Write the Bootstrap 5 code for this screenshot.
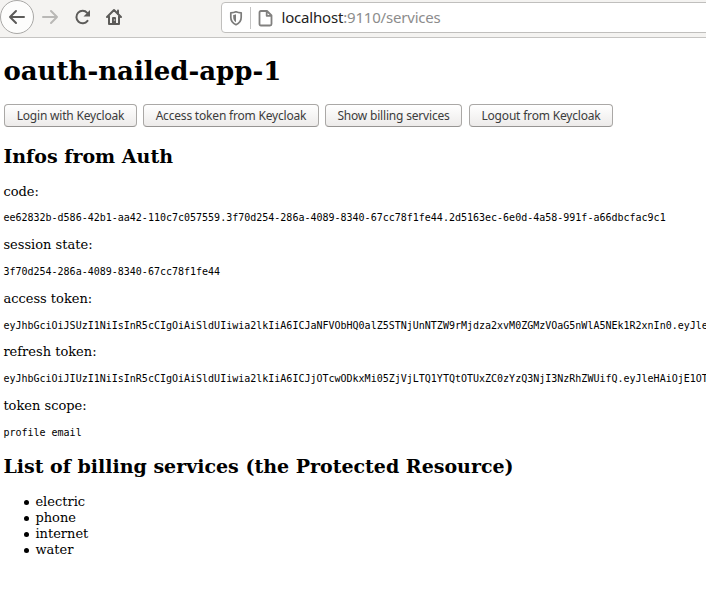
<!DOCTYPE html>
<html lang="en">
<head>
<meta charset="utf-8">
<title>oauth-nailed-app-1</title>
<link rel="stylesheet" href="https://cdn.jsdelivr.net/npm/bootstrap@5.3.0/dist/css/bootstrap.min.css">
<style>
body { font: 13px/15px "DejaVu Serif", serif; color: #000; background: #fff; }
.browser-bar { height: 38px; background: #f4f3f1; border-bottom: 1px solid #c5c4c2; font-family: "Noto Sans", sans-serif; }
.browser-bar svg { display: block; flex: none; }
.back-button { width: 34px; height: 34px; background: #fdfdfc; border: 1px solid #a9a8a6; }
.nav-icons { width: 221px; height: 34px; }
.address { height: 31px; margin-top: 2px; margin-right: -8px; padding-left: 7px; background: #fff; border: 1px solid #c0bfbd; border-radius: 4px; }
.divider { width: 1px; height: 22px; background: #c4c4c4; margin: 0 7px; }
.url { font-size: 15px; line-height: 20px; letter-spacing: -.19px; color: #8c8c8c; margin: -2px 0 0 8.5px; white-space: nowrap; }
.url span { color: #222; }
.page { padding: 18px 0 0 3.4px; }
h1 { font-size: 26px; line-height: 30px; font-weight: 700; margin: 0 0 18px; }
h2 { font-size: 19px; line-height: 23px; font-weight: 700; margin: 0 0 15.6px; }
.actions { gap: 6px; margin: 0 0 18px .6px; }
.btn-native { height: 23px; padding: 0; font: 12px/21px "Noto Sans", sans-serif; letter-spacing: -.19px; color: #3c3c3c; border: 1px solid #aaa8a6; border-bottom-color: #979593; border-radius: 4px; background: linear-gradient(#fff, #edebea); white-space: nowrap; }
.w-login { width: 133px; } .w-access { width: 176px; } .w-show { width: 137px; } .w-logout { width: 144px; margin-left: 1px; }
.page p { margin: 0 0 13.75px; }
.page pre { font: 10px/12.5px "DejaVu Sans Mono", monospace; margin: 0 0 12.35px; overflow: hidden; color: #000; }
.page pre.last { margin-bottom: 15.75px; }
.page ul { padding-left: 32px; line-height: 16px; margin: 0; list-style: none; }
.page li::before { content: ""; float: left; width: 5px; height: 5px; border-radius: 50%; background: #000; margin: 6px 0 0 -11.4px; }
</style>
</head>
<body class="overflow-hidden">
<header class="browser-bar d-flex">
  <div class="nav-icons d-flex align-items-center flex-shrink-0">
    <div class="back-button rounded-circle d-flex align-items-center justify-content-center flex-shrink-0">
      <svg width="18" height="18" viewBox="0 0 18 18" fill="none" stroke="#5c5b59" stroke-width="2" stroke-linecap="round" stroke-linejoin="round"><path d="M16 9H2M8 3L2 9l6 6"/></svg>
    </div>
    <svg width="100" height="34" viewBox="34 0 100 34" fill="none" stroke-linecap="round" stroke-linejoin="round">
      <path d="M43 17h14M51 11l6 6-6 6" stroke="#b9b8b6" stroke-width="2"/>
      <path d="M87.2 12.8A6.2 6.2 0 1 0 87.5 20.8" stroke="#5c5b59" stroke-width="2"/>
      <path d="M90 10v6.5h-6.5z" fill="#5c5b59"/>
      <path d="M107 17l7-7 7 7M109 16.5V24h10v-7.5" stroke="#5c5b59" stroke-width="2"/>
      <path d="M118 10.5v3" stroke="#5c5b59" stroke-width="2"/>
      <path d="M112 24v-6q0-1 1-1h2q1 0 1 1v6z" fill="#5c5b59"/>
      <path d="M114.2 20h.6" stroke="#f4f3f1" stroke-width="1"/>
    </svg>
  </div>
  <div class="address d-flex align-items-center flex-grow-1">
    <svg width="14" height="16" viewBox="0 0 14 16"><path d="M7 1.8C5.5 2.5 3.5 2.8 1.8 2.8v4.4C1.8 10.8 3.5 13.2 7 14.7c3.5-1.5 5.2-3.9 5.2-7.5V2.8C10.5 2.8 8.5 2.5 7 1.8z" fill="none" stroke="#7b7b7a" stroke-width="1.7" stroke-linejoin="round"/><path d="M7 4.3v8C5 11 4.2 9.5 4.2 7V4.9C5.3 4.9 6.2 4.7 7 4.3z" fill="#7b7b7a"/></svg>
    <div class="divider"></div>
    <svg width="15" height="18" viewBox="0 0 15 18" fill="none" stroke="#81807f" stroke-width="1.8" stroke-linejoin="round"><path d="M3 2h6l4.500 4.500V15q0 1.500-1.500 1.500H3Q1.500 16.500 1.500 15V3.500Q1.500 2 3 2zM8.700 2v4.800h4.800"/></svg>
    <div class="url"><span>localhost</span>:9110/services</div>
  </div>
</header>
<main class="page">
  <h1>oauth-nailed-app-1</h1>
  <div class="actions d-flex">
    <button class="btn btn-native w-login" type="button">Login with Keycloak</button>
    <button class="btn btn-native w-access" type="button">Access token from Keycloak</button>
    <button class="btn btn-native w-show" type="button">Show billing services</button>
    <button class="btn btn-native w-logout" type="button">Logout from Keycloak</button>
  </div>
  <h2>Infos from Auth</h2>
  <p>code:</p>
  <pre>ee62832b-d586-42b1-aa42-110c7c057559.3f70d254-286a-4089-8340-67cc78f1fe44.2d5163ec-6e0d-4a58-991f-a66dbcfac9c1</pre>
  <p>session state:</p>
  <pre>3f70d254-286a-4089-8340-67cc78f1fe44</pre>
  <p>access token:</p>
  <pre>eyJhbGciOiJSUzI1NiIsInR5cCIgOiAiSldUIiwia2lkIiA6ICJaNFVObHQ0alZ5STNjUnNTZW9rMjdza2xvM0ZGMzVOaG5nWlA5NEk1R2xnIn0.eyJle</pre>
  <p>refresh token:</p>
  <pre>eyJhbGciOiJIUzI1NiIsInR5cCIgOiAiSldUIiwia2lkIiA6ICJjOTcwODkxMi05ZjVjLTQ1YTQtOTUxZC0zYzQ3NjI3NzRhZWUifQ.eyJleHAiOjE1OT</pre>
  <p>token scope:</p>
  <pre class="last">profile email</pre>
  <h2>List of billing services (the Protected Resource)</h2>
  <ul>
    <li>electric</li>
    <li>phone</li>
    <li>internet</li>
    <li>water</li>
  </ul>
</main>
<script src="https://cdn.jsdelivr.net/npm/bootstrap@5.3.0/dist/js/bootstrap.bundle.min.js"></script>
</body>
</html>
